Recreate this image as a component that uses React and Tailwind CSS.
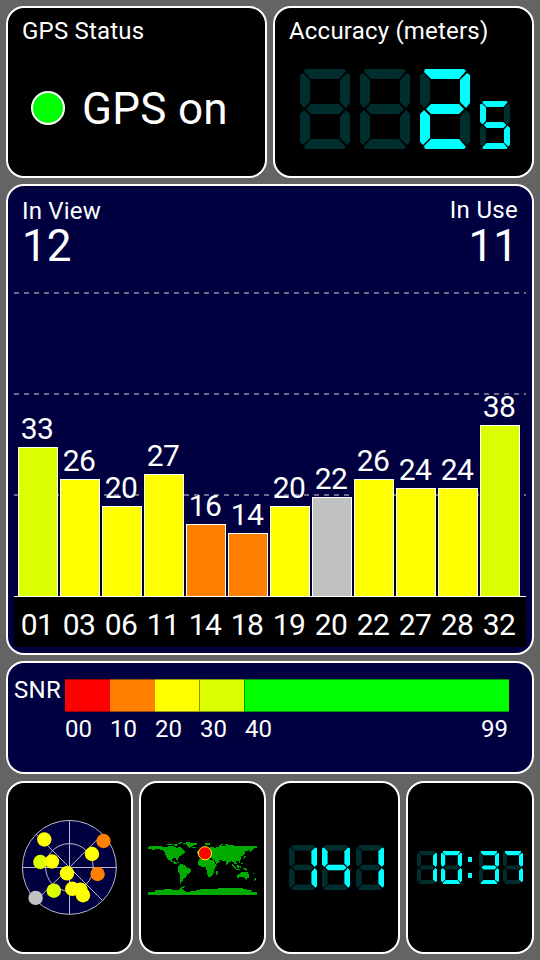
import React from 'react';
import clsx from 'clsx';

const satellites = [
  { prn: '01', snr: 33, used: true },
  { prn: '03', snr: 26, used: true },
  { prn: '06', snr: 20, used: true },
  { prn: '11', snr: 27, used: true },
  { prn: '14', snr: 16, used: true },
  { prn: '18', snr: 14, used: true },
  { prn: '19', snr: 20, used: true },
  { prn: '20', snr: 22, used: false },
  { prn: '22', snr: 26, used: true },
  { prn: '27', snr: 24, used: true },
  { prn: '28', snr: 24, used: true },
  { prn: '32', snr: 38, used: true },
];

const legend = [
  { label: '00', color: 'bg-[#ff0000]', width: 'w-[45px]' },
  { label: '10', color: 'bg-[#ff8000]', width: 'w-[45px]' },
  { label: '20', color: 'bg-[#ffff00]', width: 'w-[44px]' },
  { label: '30', color: 'bg-[#dcff00] border-l', width: 'w-[45px]' },
  { label: '40', color: 'bg-[#00ff00] border-l', width: 'w-[265px]' },
];

const skyDots = [
  { x: 44.3, y: 39.5, fill: '#ffff00' },
  { x: 103.5, y: 41, fill: '#ff8000' },
  { x: 92, y: 54, fill: '#ffff00' },
  { x: 40.3, y: 62, fill: '#dcff00' },
  { x: 52, y: 61.5, fill: '#ffff00' },
  { x: 97.6, y: 74, fill: '#ff8000' },
  { x: 67, y: 73.3, fill: '#ffff00' },
  { x: 53.8, y: 90.7, fill: '#dcff00' },
  { x: 35.6, y: 97.9, fill: '#c0c2c2' },
  { x: 72.3, y: 88.8, fill: '#ffff00' },
  { x: 80.3, y: 89.6, fill: '#ffff00' },
  { x: 83, y: 95.2, fill: '#ffff00' },
];

// a = top, then clockwise, g = middle
const segments = {
  a: '5,0 44,0 46,2 39,10 11,10 4,3',
  b: '47,4 50,6 50,34 46,39 40,33 40,11',
  c: '46,41 50,45 50,73 47,76 40,69 40,48',
  d: '11,70 39,70 46,78 44,80 5,80 4,77',
  e: '4,41 10,47 10,69 3,76 0,73 0,45',
  f: '3,4 10,11 10,33 4,39 0,34 0,6',
  g: '11,35 39,35 44,40 39,45 11,45 6,40',
};

const digitSegments = {
  0: 'abcdef',
  1: 'bc',
  2: 'abged',
  3: 'abgcd',
  4: 'fgbc',
  5: 'afgcd',
  7: 'abc',
};

function snrColor({ snr, used }) {
  if (!used) return 'bg-[#c0c2c2]';
  if (snr < 10) return 'bg-[#ff0000]';
  if (snr < 20) return 'bg-[#ff8000]';
  if (snr < 30) return 'bg-[#ffff00]';
  if (snr < 40) return 'bg-[#dcff00]';
  return 'bg-[#00ff00]';
}

function Digit({ value, className }) {
  const lit = digitSegments[value] || '';
  return (
    <svg viewBox="0 0 50 80" preserveAspectRatio="none" className={clsx('block shrink-0', className)}>
      {Object.entries(segments).map(([key, points]) => (
        <polygon key={key} points={points} fill={lit.includes(key) ? '#00ffff' : '#002e2e'} />
      ))}
    </svg>
  );
}

function Panel({ className, children }) {
  return (
    <section className={clsx('overflow-hidden rounded-[18px] border-2 border-white', className)}>
      {children}
    </section>
  );
}

function SignalChart() {
  return (
    <div className="relative mx-[6px] h-[355px]">
      {['top-0', 'top-[101px]', 'top-[202px]'].map((top) => (
        <div
          key={top}
          className={clsx(
            'absolute inset-x-0 h-[2px] bg-[repeating-linear-gradient(90deg,#6c6c8a_0_5px,transparent_5px_10px)]',
            top
          )}
        />
      ))}
      <div className="relative flex h-[304px] items-end gap-[2px] pl-[4px]">
        {satellites.map((sat) => (
          <div key={sat.prn} className="flex w-10 flex-col">
            <span className="mb-[3px] pr-[2px] text-center text-[30px] leading-[30px] tracking-[-0.7px]">
              {sat.snr}
            </span>
            <div
              className={clsx('border-x border-t border-white', snrColor(sat))}
              style={{ height: Math.round(sat.snr * 4.5) }}
            />
          </div>
        ))}
      </div>
      <div className="flex h-[51px] gap-[2px] border-t border-white bg-black pt-[13px] pl-[4px]">
        {satellites.map((sat) => (
          <span key={sat.prn} className="w-10 pr-[2px] text-center text-[30px] leading-[30px] tracking-[-0.7px]">
            {sat.prn}
          </span>
        ))}
      </div>
    </div>
  );
}

function SkyPlot() {
  return (
    <svg width="123" height="130" viewBox="8 3 123 130" className="block">
      <circle cx="69.4" cy="67.4" r="47" fill="#000040" />
      <g fill="none" stroke="#b8b8c8" strokeWidth="1">
        <circle cx="69.4" cy="67.4" r="47" />
        <circle cx="69.4" cy="67.4" r="23.8" />
        <path d="M22.4 67.5H116.4M69.5 20.4V114.4M36.2 34.2l66.4 66.4M102.6 34.2l-66.4 66.4" />
      </g>
      {skyDots.map((dot) => (
        <circle key={`${dot.x}-${dot.y}`} cx={dot.x} cy={dot.y} r="7.2" fill={dot.fill} />
      ))}
    </svg>
  );
}

function WorldMap() {
  return (
    <svg width="125" height="75" viewBox="0 0 375 225" className="block">
      <g fill="#00aa00" shapeRendering="crispEdges">
        {/* north america, arctic islands, greenland */}
        <path d="M21 49L34 46L60 48L78 50L90 46L104 49L110 54L116 48L123 52L130 60L137 66L130 70L124 74L118 78L114 84L110 91L106 85L98 85L94 90L99 95L104 93L106 98L113 102L103 101L92 95L82 87L76 78L73 68L66 60L52 56L40 58L32 62L36 56L21 56Z" />
        <path d="M75 44L84 40L100 41L94 44ZM100 42L112 41L110 46L100 46ZM105 37L126 36L122 40L108 39ZM122 38L140 36L172 37L170 43L158 47L148 52L142 48L136 42ZM156 49h12v4h-12ZM107 94l10 2v3l-8-2Z" />
        <path d="M116 104L124 101L136 107L142 113L154 118L152 126L142 133L136 143L129 149L124 156L122 163L118 160L120 140L114 124L112 114Z" />
        {/* europe and asia */}
        <path d="M180 76L190 74L196 66L204 56L214 49L226 53L240 47L254 48L268 42L280 45L300 47L320 47L354 48V53L342 55L338 62L332 68L330 60L318 62L318 70L312 76L306 76L306 86L300 93L290 94L292 100L286 104L282 97L276 94L270 97L262 104L258 94L246 91L238 90L240 96L230 101L224 91L214 84L208 80L204 84L198 78L188 84L180 82Z" />
        <path d="M172 62h5v8h-6ZM177 66h4v7h-5ZM196 39h14v4h-14ZM236 44l14-3v3l-12 4ZM256 40h10v3h-10ZM317 74l3 6-7 8-1-3Z" />
        {/* africa */}
        <path d="M178 88L190 84L200 85L212 89L222 91L228 104L234 104L226 113L222 121L222 129L216 139L207 144L203 138L200 120L196 111L180 109L173 102L173 96Z" />
        <path d="M229 124h5l-1 11h-5ZM258 101h3v4h-3Z" />
        {/* oceania */}
        <path d="M279 103l11 11-2 2-10-10ZM291 107l8-3 2 8-7 2ZM302 108h4v6h-4ZM288 117l14 1v2h-13ZM300 94h3v6h-3ZM306 99h4v4h-4ZM309 113l10 2 8 6-6 1-11-5Z" />
        <path d="M292 135L302 130L308 125L318 125L322 128L324 124L330 136L328 144L320 147L312 142L300 142L293 145ZM320 149h4v3h-4ZM349 144l3 2-7 9-2-2ZM342 130h3v3h-3Z" />
        {/* antarctica */}
        <path d="M21 195V188L42 187L44 181L84 179L116 181L124 172L132 169L136 171L126 176L132 184L142 187L168 183L174 180L204 178L228 179L238 175L268 176L300 174L324 180L338 182L336 188L354 188V195Z" />
      </g>
      <circle cx="195" cy="69" r="20" fill="#ff0000" stroke="#ffff00" strokeWidth="3" />
    </svg>
  );
}

export default function App() {
  return (
    <div className="flex h-[960px] w-[540px] flex-col bg-[#646464] p-[6px] font-['Roboto',sans-serif] text-white">
      <div className="flex justify-between">
        <Panel className="h-[172px] w-[261px] bg-black pt-[11px] pl-[14px]">
          <h2 className="text-2xl leading-6 tracking-[0.2px]">GPS Status</h2>
          <div className="mt-[42px] flex items-center gap-[17px] pl-[9px]">
            <span className="-mt-[2px] size-[34px] rounded-full border-2 border-white bg-[#00ff00]" />
            <span className="pt-px text-[44px] leading-[46px] tracking-[0.3px]">GPS on</span>
          </div>
        </Panel>
        <Panel className="h-[172px] w-[261px] bg-black pt-[11px] pl-[14px]">
          <h2 className="text-2xl leading-6 tracking-[0.2px]">Accuracy (meters)</h2>
          <div className="mt-[26px] flex items-end gap-[10px] pl-[11px]">
            <Digit className="h-20 w-[50px]" />
            <Digit className="h-20 w-[50px]" />
            <Digit value={2} className="h-20 w-[50px]" />
            <Digit value={5} className="h-12 w-[30px]" />
          </div>
        </Panel>
      </div>

      <Panel className="mt-[6px] h-[471px] shrink-0 bg-[#000040]">
        <div className="flex h-[106px] justify-between px-[14px] pt-[12px]">
          <div>
            <div className="pt-px text-2xl leading-6 tracking-[0.2px]">In View</div>
            <div className="pt-px text-[44px] leading-[44px]">12</div>
          </div>
          <div className="text-right">
            <div className="text-2xl leading-6 tracking-[0.3px]">In Use</div>
            <div className="pt-[2px] text-[44px] leading-[44px]">11</div>
          </div>
        </div>
        <SignalChart />
      </Panel>

      <Panel className="mt-[6px] flex h-[113px] shrink-0 bg-[#000040] pt-[16px] pl-[6px]">
        <span className="-mt-px w-[51px] text-2xl leading-6 tracking-[0.3px]">SNR</span>
        <div className="relative">
          <div className="flex">
            {legend.map((item) => (
              <div key={item.label} className={clsx('h-[33px] border-y border-black/40', item.color, item.width)} />
            ))}
          </div>
          <div className="mt-[5px] flex text-2xl leading-6">
            {legend.map((item) => (
              <span key={item.label} className={clsx(item.width, item.label >= '30' && 'pl-px')}>
                {item.label}
              </span>
            ))}
          </div>
          <span className="absolute top-[38px] right-px text-2xl leading-6">99</span>
        </div>
      </Panel>

      <div className="mt-[7px] flex justify-between">
        <Panel className="flex h-[173px] w-[127px] items-center justify-center bg-black">
          <SkyPlot />
        </Panel>
        <Panel className="flex h-[173px] w-[127px] items-center justify-center bg-black">
          <WorldMap />
        </Panel>
        <Panel className="flex h-[173px] w-[127px] items-center justify-center gap-[5.5px] bg-black">
          <Digit value={1} className="h-[45px] w-[28px]" />
          <Digit value={4} className="h-[45px] w-[28px]" />
          <Digit value={1} className="h-[45px] w-[28px]" />
        </Panel>
        <Panel className="flex h-[173px] w-[128px] items-center bg-black pl-[9px]">
          <Digit value={1} className="h-[33px] w-[20px]" />
          <Digit value={0} className="ml-[4px] h-[33px] w-[21px]" />
          <div className="ml-[6px] flex flex-col gap-[11px]">
            <span className="h-[5px] w-[4px] bg-[#00ffff]" />
            <span className="h-[5px] w-[4px] bg-[#00ffff]" />
          </div>
          <Digit value={3} className="ml-[7px] h-[33px] w-[20px]" />
          <Digit value={7} className="ml-[4px] h-[33px] w-[20px]" />
        </Panel>
      </div>
    </div>
  );
}
